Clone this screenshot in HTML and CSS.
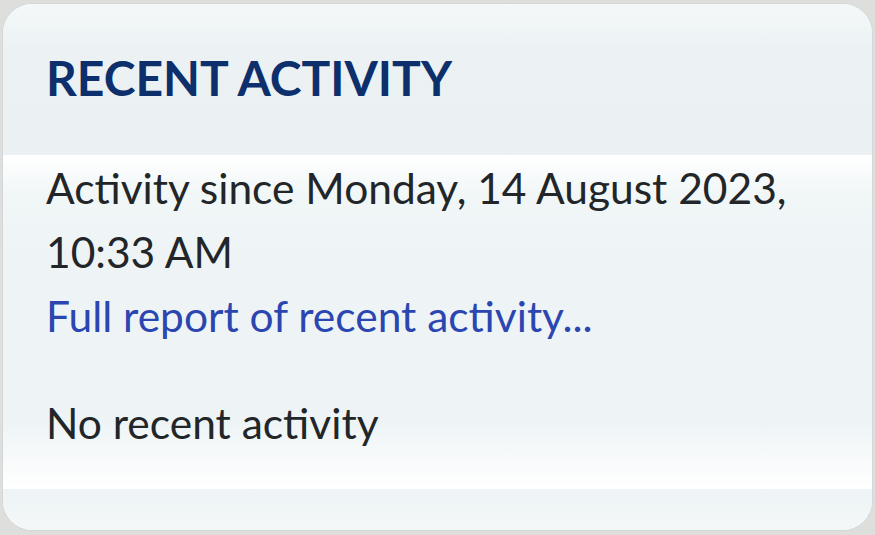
FILE: index.html
```html
<!DOCTYPE html>
<html lang="en">
<head>
  <meta charset="UTF-8" />
  <meta name="viewport" content="width=device-width, initial-scale=1.0"/>
  <title>Recent activity</title>
  <link rel="stylesheet" href="styles.css">
</head>
<body>

  <section class="block">
    <div class="block-head">
      <h2>RECENT ACTIVITY</h2>
    </div>

    <div class="block-body">
      <div class="since">Activity since Monday, 14 August 2023, 10:33 AM</div>
      <a href="#" class="report">Full report of recent activity...</a>
      <p class="empty">No recent activity</p>
    </div>

    <div class="block-foot"></div>
  </section>

</body>
</html>
```

FILE: styles.css
```css
body {
  font-family: Lato, 'Noto Sans', sans-serif;
  background: #dedfdc;
  margin: 0;
  padding: 3px 2px 2px 2px;
  color: #222629;
}
.block {
  background: #eef4f6;
  border: 1px solid #d3d7d8;
  border-radius: 30px;
  overflow: hidden;
  height: 528px;
  box-sizing: border-box;
  display: flex;
  flex-direction: column;
}
.block-head {
  background: linear-gradient(#f4f8f9, #ecf2f4 30%, #ebf1f3);
  padding: 45px 43px 0 43px;
  height: 151px;
  box-sizing: border-box;
}
h2 {
  margin: 0;
  font-size: 48px;
  line-height: 1.2;
  font-weight: bold;
  color: #0d2f6b;
}
.block-body {
  background: linear-gradient(#ffffff, #f1f6f7 12%, #eef4f6 30%, #eef4f6 80%, #ffffff);
  padding: 1px 43px 34px 43px;
  font-size: 42.5px;
  line-height: 64px;
}
.report {
  display: block;
  color: #2b46b0;
  text-decoration: none;
}
.empty {
  margin: 43px 0 0 0;
}
.block-foot {
  flex: 1;
  background: linear-gradient(#eef4f6, #f3f7f8);
}
```
